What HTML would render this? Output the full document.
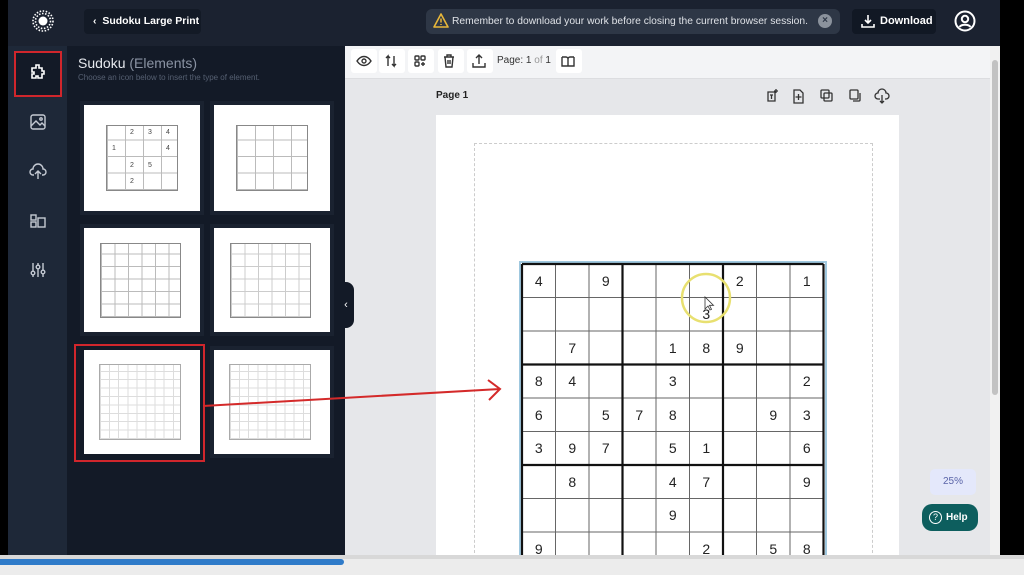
<!DOCTYPE html>
<html><head><meta charset="utf-8"><style>
*{margin:0;padding:0;box-sizing:border-box}
body{width:1024px;height:575px;overflow:hidden;background:#000;font-family:"Liberation Sans",sans-serif;position:relative}
.a{position:absolute;white-space:nowrap}
.card{position:absolute;background:#fff;width:116px;height:106px;box-shadow:0 0 0 4px #1a2230}
.tg{position:absolute;border:1px solid #888}
.tb{position:absolute;width:26px;height:24px;background:#fff;border-radius:3px;top:49px}
.ic{position:absolute;left:29px;width:18px;height:18px}
.d{position:absolute;font-size:7px;color:#444}
</style></head><body>
<div class="a" style="left:0;top:0;width:1000px;height:46px;background:#1b2230"></div>
<div class="a" style="left:8px;top:46px;width:59px;height:509px;background:#1e2838"></div>
<div class="a" style="left:67px;top:46px;width:278px;height:509px;background:#131a27"></div>
<div class="a" style="left:345px;top:46px;width:655px;height:509px;background:#e6e7ea"></div>
<div class="a" style="left:345px;top:46px;width:645px;height:33px;background:#f3f4f6;border-bottom:1px solid #dcdde0"></div>
<div class="a" style="left:990px;top:46px;width:10px;height:509px;background:#f1f1f1"></div>
<div class="a" style="left:992px;top:60px;width:6px;height:335px;background:#c2c2c2;border-radius:3px"></div>
<svg class="a" style="left:32px;top:10px" width="22" height="22" viewBox="0 0 22 22"><circle cx="11" cy="11" r="4.5" fill="#fff"/><g stroke="#fff" stroke-width="1.6" stroke-dasharray="1.5 1.6" fill="none"><circle cx="11" cy="11" r="7.5"/><circle cx="11" cy="11" r="10"/></g></svg>
<div class="a" style="left:84px;top:9px;width:117px;height:25px;background:#131a26;border-radius:4px;color:#fff;font-size:10.5px;font-weight:bold;line-height:25px;padding-left:9px">‹&nbsp; Sudoku Large Print</div>
<div class="a" style="left:426px;top:9px;width:414px;height:25px;background:#2e3746;border-radius:6px;color:#dfe2e7;font-size:10.3px;line-height:25px;padding-left:26px;overflow:hidden">Remember to download your work before closing the current browser session.</div>
<svg class="a" style="left:433px;top:13px" width="16" height="15" viewBox="0 0 16 15"><path d="M8 1L15 14H1Z" fill="none" stroke="#e8b73a" stroke-width="1.6" stroke-linejoin="round"/><path d="M8 5.5v4M8 11v1" stroke="#e8b73a" stroke-width="1.5"/></svg>
<div class="a" style="left:818px;top:14px;width:14px;height:14px;border-radius:50%;background:#8b929c;color:#2e3746;font-size:10px;line-height:14px;text-align:center;font-weight:bold">×</div>
<div class="a" style="left:852px;top:9px;width:84px;height:25px;background:#111824;border-radius:4px;color:#fff;font-size:11px;font-weight:bold;line-height:25px;padding-left:28px">Download</div>
<svg class="a" style="left:861px;top:14px" width="14" height="14" viewBox="0 0 14 14" fill="none" stroke="#fff" stroke-width="1.6"><path d="M7 1v8M4 6l3 3 3-3M1 10v3h12v-3"/></svg>
<svg class="a" style="left:954px;top:10px" width="22" height="22" viewBox="0 0 22 22" fill="none" stroke="#fff" stroke-width="2"><circle cx="11" cy="11" r="9.5"/><circle cx="11" cy="9" r="3.2"/><path d="M5.5 17c2-3 9-3 11 0"/></svg>
<div class="a" style="left:14px;top:51px;width:48px;height:46px;border:2px solid #d0262c;background:#131a27"></div>
<svg class="ic" style="top:63px" viewBox="0 0 18 18" fill="none" stroke="#fff" stroke-width="1.6"><path d="M7 2h3v3h3v3h2v3h-2v4H9v-2H7v2H3v-4h2V9H3V5h4z"/></svg>
<svg class="ic" style="top:113px" viewBox="0 0 18 18" fill="none" stroke="#c5cad3" stroke-width="1.4"><rect x="2" y="2" width="14" height="14" rx="2"/><path d="M2 13l5-5 4 4 2-2 3 3"/><circle cx="12" cy="6" r="1.2"/></svg>
<svg class="ic" style="top:162px" viewBox="0 0 18 18" fill="none" stroke="#c5cad3" stroke-width="1.4"><path d="M5 13H4a3 3 0 0 1 0-6 5 5 0 0 1 10 0 3 3 0 0 1 0 6h-1M9 17V9M6 12l3-3 3 3"/></svg>
<svg class="ic" style="top:212px" viewBox="0 0 18 18" fill="none" stroke="#c5cad3" stroke-width="1.4"><rect x="2" y="3" width="5" height="5"/><rect x="2" y="10" width="5" height="5"/><rect x="9" y="6" width="7" height="9"/></svg>
<svg class="ic" style="top:261px" viewBox="0 0 18 18" fill="none" stroke="#c5cad3" stroke-width="1.4"><path d="M4 2v14M9 2v14M14 2v14"/><circle cx="4" cy="12" r="1.8" fill="#1e2838"/><circle cx="9" cy="6" r="1.8" fill="#1e2838"/><circle cx="14" cy="11" r="1.8" fill="#1e2838"/></svg>
<div class="a" style="left:78px;top:55px;color:#e6e9ee;font-size:14px">Sudoku <span style="color:#8a93a3">(Elements)</span></div>
<div class="a" style="left:78px;top:73px;color:#566072;font-size:8px">Choose an icon below to insert the type of element.</div>
<div class="card" style="left:84px;top:105px"><div class="tg" style="left:22px;top:20px;width:72px;height:66px;background:repeating-linear-gradient(90deg,#bbb 0 1px,transparent 1px 18px),repeating-linear-gradient(0deg,#bbb 0 1px,transparent 1px 16.5px)"></div>
<span class="d" style="left:46px;top:24px">2</span><span class="d" style="left:64px;top:24px">3</span><span class="d" style="left:82px;top:24px">4</span><span class="d" style="left:28px;top:40px">1</span><span class="d" style="left:82px;top:40px">4</span><span class="d" style="left:46px;top:57px">2</span><span class="d" style="left:64px;top:57px">5</span><span class="d" style="left:46px;top:73px">2</span></div>
<div class="card" style="left:214px;top:105px"><div class="tg" style="left:22px;top:20px;width:72px;height:66px;background:repeating-linear-gradient(90deg,#bbb 0 1px,transparent 1px 18px),repeating-linear-gradient(0deg,#bbb 0 1px,transparent 1px 16.5px)"></div></div>
<div class="card" style="left:84px;top:228px;height:104px"><div class="tg" style="left:16px;top:15px;width:81px;height:75px;background:repeating-linear-gradient(90deg,#bbb 0 1px,transparent 1px 13.5px),repeating-linear-gradient(0deg,#bbb 0 1px,transparent 1px 12.5px)"></div></div>
<div class="card" style="left:214px;top:228px;height:104px"><div class="tg" style="left:16px;top:15px;width:81px;height:75px;background:repeating-linear-gradient(90deg,#ccc 0 1px,transparent 1px 13.5px),repeating-linear-gradient(0deg,#ccc 0 1px,transparent 1px 12.5px)"></div></div>
<div class="a" style="left:74px;top:344px;width:131px;height:118px;border:2px solid #d0262c"></div>
<div class="card" style="left:84px;top:350px;height:104px;box-shadow:none"><div class="tg" style="left:15px;top:14px;width:82px;height:76px;border-color:#aaa;background:repeating-linear-gradient(90deg,#ddd 0 1px,transparent 1px 9.1px),repeating-linear-gradient(0deg,#ddd 0 1px,transparent 1px 8.4px)"></div></div>
<div class="card" style="left:214px;top:350px;height:104px"><div class="tg" style="left:15px;top:14px;width:82px;height:76px;border-color:#aaa;background:repeating-linear-gradient(90deg,#ddd 0 1px,transparent 1px 9.1px),repeating-linear-gradient(0deg,#ddd 0 1px,transparent 1px 8.4px)"></div></div>
<div class="a" style="left:338px;top:282px;width:16px;height:46px;background:#131a27;border-radius:0 8px 8px 0;color:#fff;font-size:11px;line-height:46px;text-align:center">‹</div>
<div class="tb" style="left:351px"></div><div class="tb" style="left:379px"></div><div class="tb" style="left:408px"></div><div class="tb" style="left:438px"></div><div class="tb" style="left:467px"></div><div class="tb" style="left:556px"></div>
<svg class="a" style="left:351px;top:49px" width="240" height="24" viewBox="0 0 240 24" fill="none" stroke="#333" stroke-width="1.4"><path d="M6 12c4-6 10-6 14 0c-4 6-10 6-14 0z"/><circle cx="13" cy="12" r="2"/><path d="M37 17V7l-2 2M37 7l2 2M43 7v10l-2-2M43 17l2-2"/><rect x="64" y="7" width="4" height="4" rx="1"/><rect x="70" y="7" width="4" height="4" rx="1"/><rect x="64" y="13" width="4" height="4" rx="1"/><path d="M72 13v4M70 15h4"/><path d="M93 8h10M96 8V6h4v2M94 8l1 10h6l1-10M97 11v4M99 11v4"/><path d="M128 15V6M125 9l3-3 3 3M122 14v4h12v-4"/><path d="M211 8h4a2 2 0 0 1 2 2v7M211 8v9h6M223 8h-4a2 2 0 0 0-2 2M223 8v9h-6"/></svg>
<div class="a" style="left:497px;top:55px;font-size:10px;color:#333">Page: 1 <span style="color:#999">of</span> 1</div>
<div class="a" style="left:436px;top:90px;font-size:10px;font-weight:bold;color:#222">Page 1</div>
<svg class="a" style="left:764px;top:87px" width="130" height="18" viewBox="0 0 130 18" fill="none" stroke="#333" stroke-width="1.3"><path d="M4 5h7v9H4zM6 8h3M7.5 8v4M12 2v4M10 4h4"/><path d="M30 3h6l3 3v10h-9zM34.5 7v6M31.5 10h6"/><rect x="57" y="3" width="8" height="8" rx="1"/><rect x="60" y="6" width="8" height="8" rx="1"/><rect x="86" y="3" width="8" height="9" rx="1"/><path d="M89 14h6a1 1 0 0 0 1-1V6"/><path d="M116 12h-2a3 3 0 0 1 0-6 4 4 0 0 1 8 0 3 3 0 0 1 0 6h-1M118 8v8M116 14l2 2 2-2"/></svg>
<div class="a" style="left:436px;top:115px;width:463px;height:440px;background:#fff"></div>
<div class="a" style="left:474px;top:143px;width:399px;height:420px;border:1px dashed #ccc"></div>
<svg class="a" style="left:0;top:0" width="1024" height="575" viewBox="0 0 1024 575">
<rect x="520" y="262" width="306" height="300" fill="none" stroke="#9fc8df" stroke-width="2"/>
<g stroke="#666" stroke-width="1"><path d="M555.5 264V562M589 264V562M656 264V562M689.5 264V562M756.5 264V562M790 264V562M522 297.5H823.5M522 331H823.5M522 398H823.5M522 431.5H823.5M522 498.5H823.5M522 532H823.5"/></g>
<g stroke="#111" stroke-width="2.2" fill="none"><path d="M522 264V562M622.5 264V562M723 264V562M823.5 264V562M522 264H823.5M522 364.5H823.5M522 465H823.5"/></g>
<g font-family="Liberation Sans,sans-serif" font-size="14" fill="#222" text-anchor="middle">
<text x="538.75" y="286">4</text><text x="605.75" y="286">9</text><text x="739.75" y="286">2</text><text x="806.75" y="286">1</text>
<text x="706.25" y="319">3</text>
<text x="572.25" y="353">7</text><text x="672.75" y="353">1</text><text x="706.25" y="353">8</text><text x="739.75" y="353">9</text>
<text x="538.75" y="386">8</text><text x="572.25" y="386">4</text><text x="672.75" y="386">3</text><text x="806.75" y="386">2</text>
<text x="538.75" y="420">6</text><text x="605.75" y="420">5</text><text x="639.25" y="420">7</text><text x="672.75" y="420">8</text><text x="773.25" y="420">9</text><text x="806.75" y="420">3</text>
<text x="538.75" y="453">3</text><text x="572.25" y="453">9</text><text x="605.75" y="453">7</text><text x="672.75" y="453">5</text><text x="706.25" y="453">1</text><text x="806.75" y="453">6</text>
<text x="572.25" y="487">8</text><text x="672.75" y="487">4</text><text x="706.25" y="487">7</text><text x="806.75" y="487">9</text>
<text x="672.75" y="520">9</text>
<text x="538.75" y="554">9</text><text x="706.25" y="554">2</text><text x="773.25" y="554">5</text><text x="806.75" y="554">8</text>
</g>
<circle cx="706" cy="298" r="24" fill="none" stroke="#e8e070" stroke-width="2.5"/>
<path d="M705 297v12l3-3 2 4 1.5-.7-2-4h4z" fill="#fff" stroke="#333" stroke-width="0.8"/>
<path d="M203 406L500 389M488 380l12 9-11 11" fill="none" stroke="#d42a2a" stroke-width="2"/>
</svg>
<div class="a" style="left:930px;top:469px;width:46px;height:26px;background:#e4e8fb;border-radius:5px;color:#5a64a8;font-size:10px;line-height:26px;text-align:center">25%</div>
<div class="a" style="left:922px;top:504px;width:56px;height:27px;background:#0d5e5e;border-radius:10px;color:#fff;font-size:10px;font-weight:bold;line-height:27px;padding-left:24px">Help</div>
<div class="a" style="left:929px;top:511px;width:13px;height:13px;border:1.3px solid #fff;border-radius:50%;color:#fff;font-size:9px;line-height:11px;text-align:center">?</div>
<div class="a" style="left:0;top:555px;width:1024px;height:20px;background:#ececec"></div>
<div class="a" style="left:0;top:555px;width:1024px;height:4px;background:#d8d8d8"></div>
<div class="a" style="left:0;top:559px;width:344px;height:6px;background:#2f7bc9;border-radius:0 3px 3px 0"></div>
<div class="a" style="left:0;top:0;width:8px;height:555px;background:#000"></div>
<div class="a" style="left:1000px;top:0;width:24px;height:555px;background:#000"></div>
</body></html>
